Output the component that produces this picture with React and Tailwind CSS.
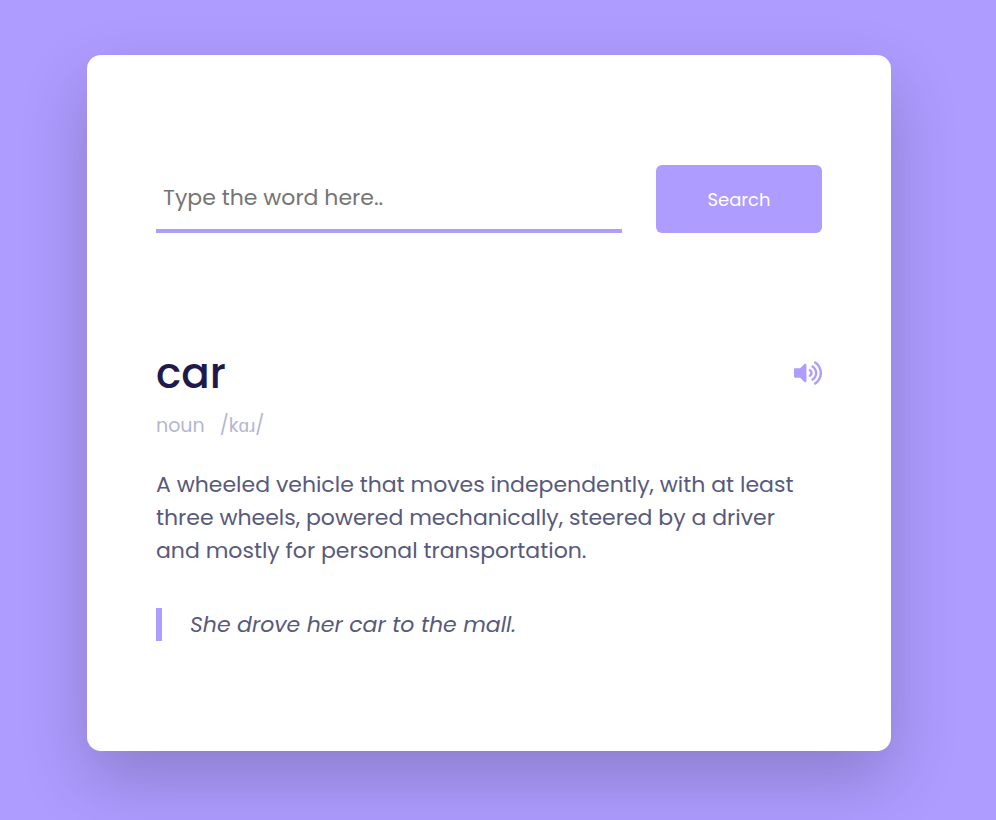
import { useState } from "react";
import { FaVolumeUp } from "react-icons/fa";

export default function App() {
  const [word, setWord] = useState("");
  return (
    <div className="min-h-screen bg-[#ae9cff] pt-[55px] pb-[69px] pl-[87px] pr-[105px] font-['Poppins','Open_Sans',sans-serif]">
      <main className="rounded-[14px] bg-white px-[69px] py-[110px] shadow-[0_28px_68px_rgba(0,0,0,0.2)]">
        <form className="flex justify-between gap-[34px]" onSubmit={(e) => e.preventDefault()}>
          <input
            type="text"
            aria-label="Word"
            value={word}
            onChange={(e) => setWord(e.target.value)}
            placeholder="Type the word here.."
            className="h-[68px] min-w-0 flex-1 border-b-4 border-[#ae9cff] px-[7px] text-[22px] text-[#1f194c] outline-none placeholder:text-[#757575]"
          />
          <button type="submit" className="h-[68px] w-[166px] rounded-md bg-[#ae9cff] text-[18px] text-white">
            Search
          </button>
        </form>
        <section className="mt-[110px]">
          <div className="flex items-start justify-between">
            <h1 className="text-[42px] leading-[62px] font-medium text-[#1f194c]">car</h1>
            <button type="button" aria-label="Play pronunciation" className="pt-[16px] text-[#ae9cff]">
              <FaVolumeUp size={28} />
            </button>
          </div>
          <div className="mt-[6px] flex gap-[15px] text-[19px] leading-[29px] text-[#b3b6d4]">
            <p>noun</p>
            <p>/kɑɹ/</p>
          </div>
          <p className="mt-[28px] text-[22px] leading-[33px] text-[#575a7b]">
            A wheeled vehicle that moves independently, with at least three wheels, powered mechanically, steered by a driver and mostly for personal transportation.
          </p>
          <blockquote className="mt-[41px] border-l-[6px] border-[#ae9cff] pl-[28px] text-[22px] leading-[33px] text-[#575a7b] italic">
            She drove her car to the mall.
          </blockquote>
        </section>
      </main>
    </div>
  );
}
